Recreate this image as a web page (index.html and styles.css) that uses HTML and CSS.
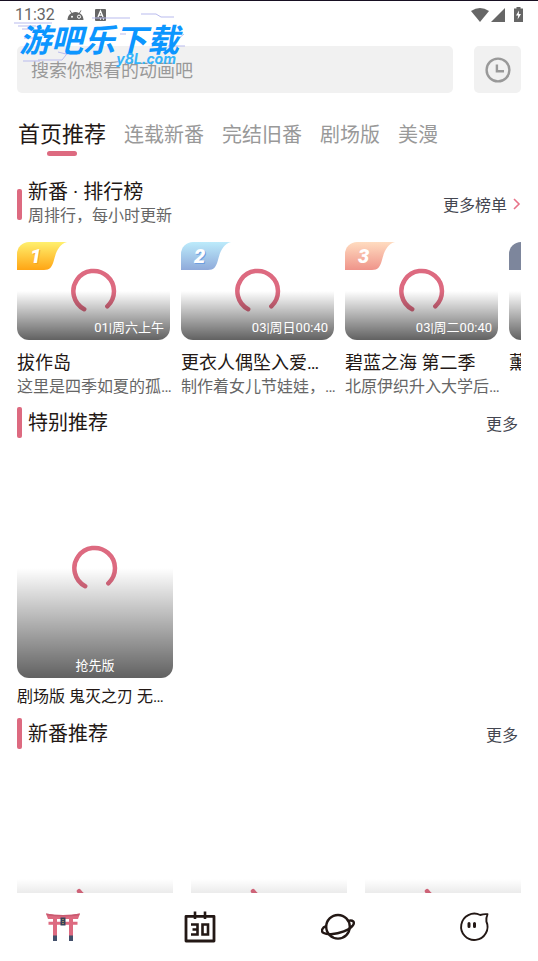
FILE: index.html
```html
<!DOCTYPE html>
<html lang="zh-CN">
<head>
<meta charset="utf-8">
<meta name="viewport" content="width=device-width, initial-scale=1">
<title>首页推荐</title>
<link rel="stylesheet" href="styles.css">
</head>
<body>
<svg class="defs" aria-hidden="true">
  <defs>
    <linearGradient id="gold" x2="0" y2="1"><stop stop-color="#fff06e"/><stop offset="1" stop-color="#ffa514"/></linearGradient>
    <linearGradient id="silver" x2="0" y2="1"><stop stop-color="#bcebfb"/><stop offset="1" stop-color="#8faada"/></linearGradient>
    <linearGradient id="bronze" x2="0" y2="1"><stop stop-color="#ffdcc0"/><stop offset="1" stop-color="#ef948a"/></linearGradient>
    <symbol id="flag" viewBox="0 0 50 28"><path d="M0 0H50C42 2 39 10 37 18C35 25 33 28 27 28H0Z"/></symbol>
    <symbol id="ring" viewBox="0 0 46 46"><path d="M13.2 41.2A20.3 20.3 0 1 1 36.3 38.3" fill="none" stroke="#dd6a80" stroke-width="4.5" stroke-linecap="round"/></symbol>
    <symbol id="arc" viewBox="0 0 46 46"><path d="M7 35.2A20.3 20.3 0 0 0 23 43.3" fill="none" stroke="#dd6a80" stroke-width="4.5" stroke-linecap="round"/></symbol>
  </defs>
</svg>

<header class="status">
  <span class="time">11:32</span>
  <svg class="droid" width="17" height="10" viewBox="0 0 17 10"><path d="M0.5 10A8 8 0 0 1 4.2 3.3L2.5.6L3.2.2L5 2.9A8 8 0 0 1 12 2.9L13.8.2L14.5.6L12.8 3.3A8 8 0 0 1 16.5 10Z" fill="#666"/><circle cx="5" cy="6.7" r="1" fill="#fff"/><circle cx="12" cy="6.7" r="1.6" fill="none" stroke="#fff"/></svg>
  <svg width="11" height="12" viewBox="0 0 11 12"><rect width="11" height="12" rx="1" fill="#666"/><path d="M3 8L5.5 2L8 8M3.8 6.2H7.2M5 10H6M8 10H9" fill="none" stroke="#fff" stroke-width="1.3"/></svg>
  <span class="spacer"></span>
  <svg width="18" height="14" viewBox="0 0 18 14"><path d="M0 3Q9-3 18 3L9 14Z" fill="#666"/></svg>
  <svg class="signal" width="14" height="14" viewBox="0 0 14 14"><path d="M14 0V14H0Z" fill="#666"/></svg>
  <svg width="9" height="15" viewBox="0 0 9 15"><path d="M2.5 0H6.5V1.5H9V15H0V1.5H2.5Z" fill="#666"/><path d="M5 3.5L2 8.5H4.2L3.6 12.5L7 7H4.8Z" fill="#fff"/></svg>
</header>

<div class="mark">
  <svg class="mark-lines" width="176" height="56" viewBox="0 0 176 56" fill="none" stroke="#b9bbee" stroke-width="1"><path d="M0 11H38M4 14H22M8 17H16M78 6H116M127 2H142L147 5H160M9 49H26M24 48H48L56 38M10 26H28M44 40L52 42H66M106 22H112M154 34H171M158 32L170 22"/></svg>
  <span class="mark-name">游吧乐下载</span>
  <span class="mark-site">y8L.com</span>
</div>

<main class="page">
  <form class="search">
    <input type="search" class="search-box" aria-label="搜索" placeholder="搜索你想看的动画吧">
    <button type="button" class="history" aria-label="历史">
      <svg width="27" height="27" viewBox="0 0 27 27" fill="none" stroke="#999" stroke-width="2.4"><circle cx="14" cy="14" r="11.4"/><path d="M12.9 8.5V15.3H20"/></svg>
    </button>
  </form>

  <nav class="tabs">
    <button type="button" class="tab active">首页推荐</button>
    <button type="button" class="tab">连载新番</button>
    <button type="button" class="tab">完结旧番</button>
    <button type="button" class="tab">剧场版</button>
    <button type="button" class="tab">美漫</button>
  </nav>

  <section>
    <div class="head">
      <div class="head-text"><h2>新番 · 排行榜</h2><p>周排行，每小时更新</p></div>
      <a class="more" href="#rank">更多榜单<svg width="8" height="12" viewBox="0 0 8 12"><path d="M1 1L6 6L1 11" fill="none" stroke="#e87389" stroke-width="1.6"/></svg></a>
    </div>
    <div class="ranks">
      <article class="rank">
        <div class="cover wide">
          <svg class="ring"><use href="#ring"/></svg>
          <svg class="flag" fill="url(#gold)"><use href="#flag"/></svg><b class="place first">1</b>
          <span class="info">01|周六上午</span>
        </div>
        <h3>拔作岛</h3><p>这里是四季如夏的孤岛，故事由此开始</p>
      </article>
      <article class="rank">
        <div class="cover wide">
          <svg class="ring"><use href="#ring"/></svg>
          <svg class="flag" fill="url(#silver)"><use href="#flag"/></svg><b class="place second">2</b>
          <span class="info">03|周日00:40</span>
        </div>
        <h3>更衣人偶坠入爱河 第二季</h3><p>制作着女儿节娃娃，度过每一天</p>
      </article>
      <article class="rank">
        <div class="cover wide">
          <svg class="ring"><use href="#ring"/></svg>
          <svg class="flag" fill="url(#bronze)"><use href="#flag"/></svg><b class="place">3</b>
          <span class="info">03|周二00:40</span>
        </div>
        <h3>碧蓝之海 第二季</h3><p>北原伊织升入大学后的生活开始了</p>
      </article>
      <article class="rank">
        <div class="cover wide">
          <svg class="ring"><use href="#ring"/></svg>
          <svg class="flag" fill="#7d869c"><use href="#flag"/></svg>
        </div>
        <h3>薰</h3>
      </article>
    </div>
  </section>

  <section>
    <div class="head"><div class="head-text"><h2>特别推荐</h2></div><a class="more plain" href="#special">更多</a></div>
    <div class="posters">
      <article class="poster">
        <div class="cover tall"><svg class="ring"><use href="#ring"/></svg><span class="info middle">抢先版</span></div>
        <h4>剧场版 鬼灭之刃 无限城篇</h4>
      </article>
    </div>
  </section>

  <section>
    <div class="head"><div class="head-text"><h2>新番推荐</h2></div><a class="more plain" href="#new">更多</a></div>
    <div class="posters">
      <article class="poster"><div class="cover tall"><svg class="ring"><use href="#arc"/></svg></div></article>
      <article class="poster"><div class="cover tall"><svg class="ring"><use href="#arc"/></svg></div></article>
      <article class="poster"><div class="cover tall"><svg class="ring"><use href="#arc"/></svg></div></article>
    </div>
  </section>
</main>

<nav class="dock">
  <a href="#home" aria-label="首页"><svg viewBox="0 0 34 34"><path d="M0 3.5Q17 6.5 34 3.5L32 9H2ZM2.5 11.8H31.5V14.8H2.5Z" fill="#dd6a80"/><path d="M0 3.5Q17 6.5 34 3.5L33 5.5Q17 7.5 1 5.5Z" fill="#c95a70"/><path d="M7 9H11V26H7ZM23 9H27V26H23Z" fill="#dd6a80"/><path d="M7 25.5H11V31H7ZM23 25.5H27V31H23Z" fill="#43506b"/><path d="M14.5 7.5H19.5V15.5H14.5Z" fill="#34425a"/><path d="M16 9.5H18M16 11.5H18M16 13.5H18" stroke="#96835c"/></svg></a>
  <a href="#calendar" aria-label="日历"><svg viewBox="0 0 34 34" fill="none" stroke="#231815" stroke-width="2.8"><path d="M3 6.3H31V31H3Z" stroke-linejoin="round"/><path d="M12 1.5V9M22 1.5V9" stroke-width="2.6"/><path d="M8 14.5H14.5V24.5H8M9.5 19.5H14.5M19.5 14.5H25V24.5H19.5Z" stroke-width="2.6"/></svg></a>
  <a href="#discover" aria-label="发现"><svg viewBox="0 0 34 34" fill="none" stroke="#231815" stroke-width="2.4"><circle cx="17" cy="16.8" r="11.8"/><path d="M27.5 10.8C32 9.8 34 12 32 15.2C28 20.3 19 23.8 10 24.3C3.5 24.5 0 22.5 1.2 19.3C1.8 17.7 3.5 16.6 5.3 16"/></svg></a>
  <a href="#me" aria-label="我的"><svg viewBox="0 0 34 34"><path d="M22.2 5A13.2 13.2 0 1 0 28.4 11.5Q28 8 29.5 4.2Q26 3.8 22.2 5Z" fill="none" stroke="#231815" stroke-width="1.9" stroke-linejoin="round"/><path d="M11 13.5V16.5M16.5 13.5V16.5" stroke="#231815" stroke-width="3" stroke-linecap="round"/></svg></a>
</nav>
</body>
</html>
```
FILE: styles.css
```css
* {
  box-sizing: border-box;
}

body {
  position: relative;
  display: flex;
  flex-direction: column;
  height: 100vh;
  margin: 0;
  overflow: hidden;
  border-top: 1px solid #170f22;
  background: #fff;
  color: #231815;
  font-family: Roboto, "Noto Sans CJK SC", sans-serif;
}

h2, h3, h4, p {
  margin: 0;
  font-weight: 400;
}

svg {
  display: block;
  flex: none;
}

button, input {
  border: 0;
  padding: 0;
  font: inherit;
}

a {
  color: inherit;
  text-decoration: none;
}

.defs {
  position: absolute;
  width: 0;
  height: 0;
}

.status {
  display: flex;
  align-items: center;
  height: 27px;
  padding: 0 15px;
  color: #666;
  font-size: 16px;
}

.time {
  margin-right: 12px;
}

.droid {
  margin-right: 11px;
}

.spacer {
  flex: 1;
}

.signal {
  margin: 0 9px 0 2px;
}

.mark {
  position: absolute;
  top: 11px;
  left: 14px;
  z-index: 2;
  width: 176px;
  height: 56px;
  color: #0c96ff;
  font-style: italic;
  font-weight: 700;
  pointer-events: none;
}

.mark-name {
  position: absolute;
  top: 7px;
  left: 5px;
  font-size: 32px;
  line-height: 44px;
  white-space: nowrap;
}

.mark-site {
  position: absolute;
  right: 14px;
  bottom: 1px;
  color: #35b4fb;
  font-family: Inter, sans-serif;
  font-size: 14px;
  line-height: 16px;
}

.mark-lines {
  position: absolute;
  inset: 0;
}

.page {
  flex: 1;
  min-height: 0;
  padding: 18px 17px 0;
  overflow: hidden;
}

.search {
  display: flex;
  gap: 21px;
}

.search-box {
  flex: 1;
  min-width: 0;
  height: 47px;
  padding: 2px 14px 0;
  border-radius: 5px;
  background: #f1f1f1;
  font-size: 18px;
}

.search-box::placeholder {
  color: #999;
}

.history {
  display: grid;
  place-items: center;
  width: 47px;
  height: 47px;
  border-radius: 5px;
  background: #f1f1f1;
}

.tabs {
  display: flex;
  gap: 16px;
  height: 37px;
  margin: 26px 0 24px;
}

.tab {
  position: relative;
  height: 32px;
  padding: 0 1px;
  background: none;
  color: #999;
  font-size: 20px;
  line-height: 32px;
}

.tab.active {
  color: #231815;
  font-size: 22px;
}

.tab.active::after {
  content: "";
  position: absolute;
  top: 32px;
  left: 50%;
  width: 30px;
  height: 5px;
  margin-left: -15px;
  border-radius: 3px;
  background: #dd6a80;
}

.head {
  display: flex;
  align-items: center;
  justify-content: space-between;
}

.head-text {
  flex: 1;
}

.head::before {
  content: "";
  width: 5px;
  height: 31px;
  margin-right: 6px;
  border-radius: 2px;
  background: #dd6a80;
}

.head h2 {
  font-size: 20px;
  line-height: 24px;
}

.head p {
  color: #666;
  font-size: 16px;
  line-height: 24px;
}

.more {
  display: flex;
  align-items: center;
  gap: 6px;
  color: #444650;
  font-size: 16px;
}

.plain {
  padding-right: 3px;
}

.ranks {
  display: flex;
  gap: 11px;
  margin: 14px 0 8px;
  overflow: hidden;
}

.rank {
  flex: none;
  width: 153px;
}

.rank h3, .rank p, .poster h4 {
  overflow: hidden;
  line-height: 24px;
  text-overflow: ellipsis;
  white-space: nowrap;
}

.rank h3 {
  font-size: 18px;
}

.rank p {
  margin-right: -4px;
  color: #666;
  font-size: 16px;
}

.cover {
  position: relative;
  display: grid;
  place-items: center;
  margin-bottom: 11px;
  overflow: hidden;
  border-radius: 12px;
}

.cover::after {
  content: "";
  position: absolute;
  inset: 50% 0 0;
  background: linear-gradient(transparent, rgba(0, 0, 0, 0.62));
}

.wide {
  height: 98px;
}

.tall {
  height: 220px;
  margin-bottom: 7px;
}

.ring {
  width: 46px;
  height: 46px;
}

.flag {
  position: absolute;
  top: 0;
  left: 0;
  width: 50px;
  height: 28px;
}

.place {
  position: absolute;
  top: 3px;
  left: 13px;
  color: #fff;
  font-size: 20px;
  font-style: italic;
  font-weight: 900;
  line-height: 22px;
}

.first {
  text-shadow: 1px 1px #f5a623;
}

.second {
  text-shadow: 1px 1px #6f9fe0;
}

.info {
  position: absolute;
  right: 6px;
  bottom: 3px;
  z-index: 1;
  color: #fff;
  font-size: 13px;
  line-height: 18px;
}

.middle {
  right: 0;
  left: 0;
  text-align: center;
}

.posters {
  display: grid;
  grid-template-columns: repeat(3, 1fr);
  gap: 18px;
  margin: 20px 0 9px;
}

.poster {
  min-width: 0;
}

.poster h4 {
  font-size: 16px;
}

.dock {
  display: flex;
  align-items: center;
  justify-content: space-between;
  height: 68px;
  padding: 0 46px;
  background: #fff;
}

.dock svg {
  width: 34px;
  height: 34px;
}
```
